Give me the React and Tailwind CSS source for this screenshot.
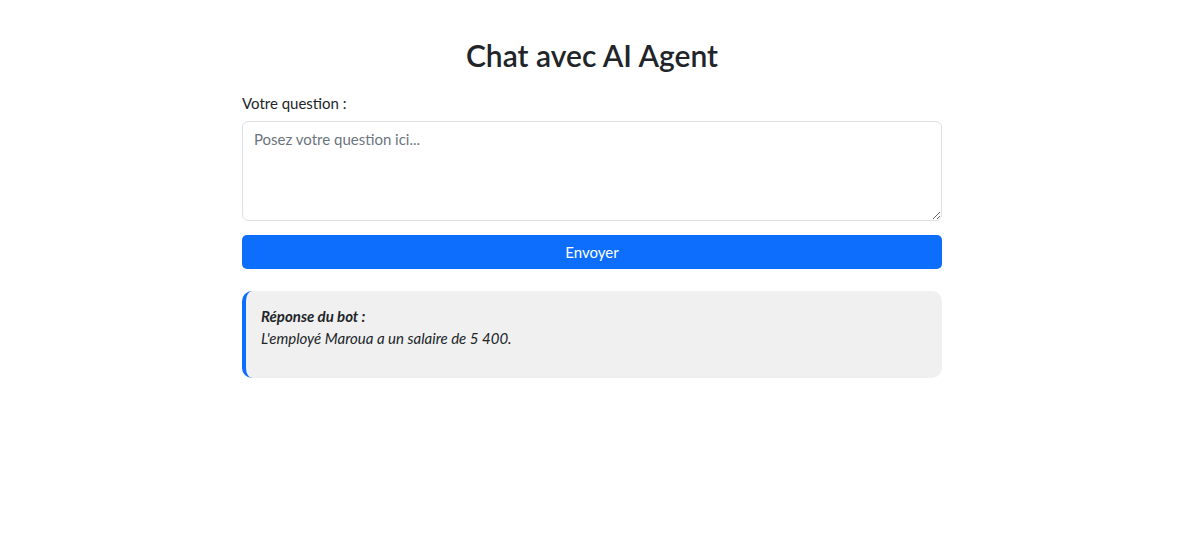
export default function App() {
  return (
    <div className="min-h-[554px] bg-white text-[#212529]" style={{ fontFamily: 'Lato, "Open Sans", sans-serif' }}>
      <div className="mx-auto max-w-[700px] pt-[36px]">
        <h2 className="text-center text-[30px] font-semibold leading-[38px] text-[#212529]">Chat avec AI Agent</h2>
        <div className="mt-[18px] text-[15px] leading-[22px]">Votre question :</div>
        <textarea
          className="mt-[7px] block h-[100px] w-full resize-y rounded-[6px] border border-[#dee2e6] px-[11px] pt-[6px] pb-[8px] text-[15px] leading-[22px] outline-none placeholder:text-[#6c757d]"
          placeholder="Posez votre question ici..."
        />
        <button className="mt-[14px] block h-[34px] w-full rounded-[5px] bg-[#0d6efd] text-[15px] text-white">Envoyer</button>
        <div className="mt-[22px] h-[87px] rounded-[10px] border-l-[4px] border-[#0d6efd] bg-[#f0f0f0] pl-[15px] pt-[14px] text-[15px] italic leading-[22px]">
          <div className="font-bold">Réponse du bot :</div>
          <div>L'employé Maroua a un salaire de 5 400.</div>
        </div>
      </div>
    </div>
  );
}
